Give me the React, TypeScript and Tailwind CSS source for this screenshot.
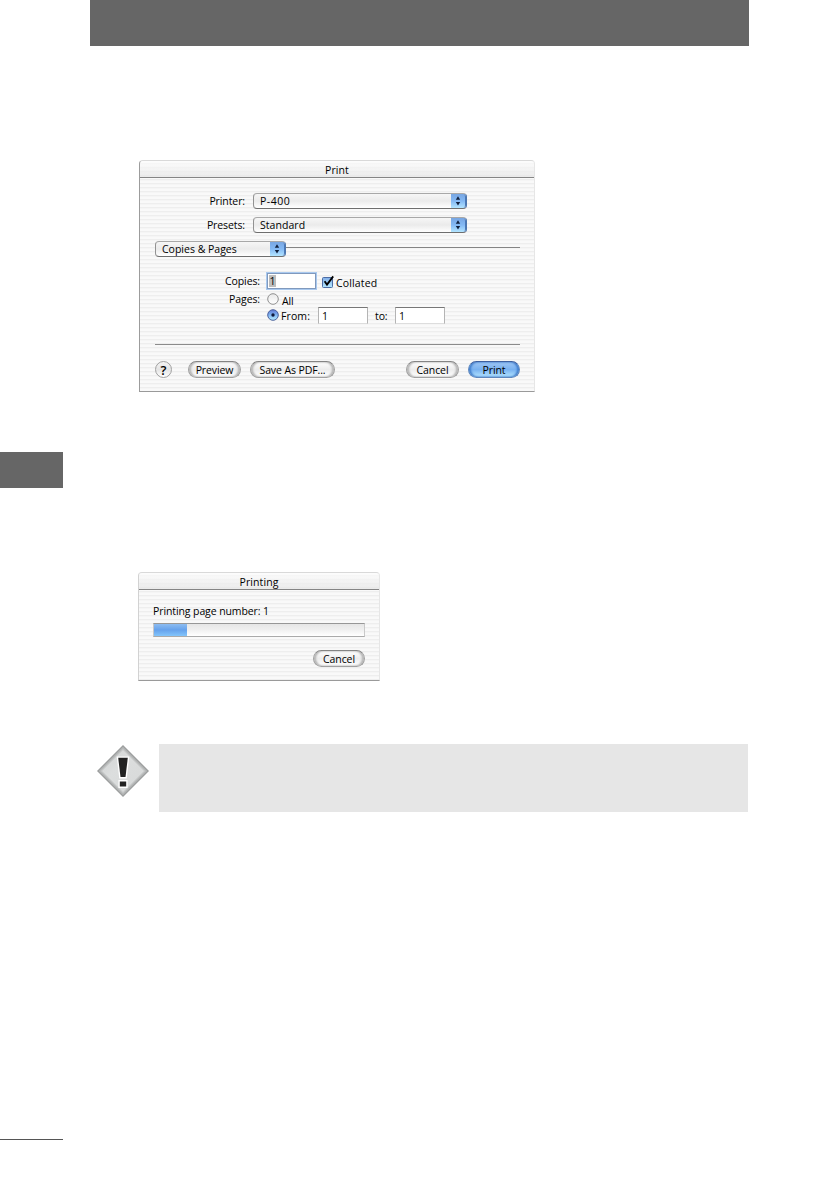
import type { ReactNode } from 'react'
import clsx from 'clsx'

const STRIPES =
  'bg-[repeating-linear-gradient(to_bottom,#f9f9f9_0px,#f9f9f9_2px,#eeeeee_2px,#eeeeee_3px,#f5f5f5_3px,#f5f5f5_4px)]'

interface WindowProps {
  title: string
  className: string
  children: ReactNode
}

function AquaWindow({ title, className, children }: WindowProps) {
  return (
    <section
      className={clsx(
        'flex flex-col rounded-t-[4px] border border-t-[#d9d9d9] border-r-[#e6e6e6] border-b-[#9a9a9a]',
        STRIPES,
        className,
      )}
    >
      <header className="flex h-[17px] shrink-0 items-center justify-center rounded-t-[3px] border-b border-[#858585] bg-linear-to-b from-white/60 to-[#e6e6e6]/70 pt-px">
        <h2 className="tracking-[0.1px]">{title}</h2>
      </header>
      {children}
    </section>
  )
}

function Arrows() {
  return (
    <span className="flex h-full w-[15px] items-center justify-center rounded-r-[3px] border-r border-[#4a78b8] bg-linear-to-b from-[#78a6e2] via-[#84b9f4] to-[#b3e5ff]">
      <svg width="6" height="10" viewBox="0 0 6 10" fill="#10203c">
        <path d="M3 0.2 5.2 3.7H0.8ZM3 9.6 0.8 6.1H5.2Z" />
      </svg>
    </span>
  )
}

function PopUp({ value, className }: { value: string; className: string }) {
  return (
    <button
      className={clsx(
        'flex h-[16px] items-center justify-between rounded-[4px] border border-t-[#a8a8a8] border-r-[#4c76ad] border-b-[#6e6e6e] border-l-[#929292] bg-linear-to-b from-[#f6f6f6] via-[#ebebeb] to-white pl-[6px]',
        className,
      )}
    >
      <span>{value}</span>
      <Arrows />
    </button>
  )
}

function PushButton({ label, className, primary }: { label: string; className: string; primary?: boolean }) {
  return (
    <button
      className={clsx(
        'flex h-[17px] shrink-0 items-center justify-center rounded-full border',
        primary
          ? 'border-[#5f87bd] border-t-[#3d5f9f] bg-linear-to-b from-[#9fc6f3] via-[#78b1f0] to-[#b5e6ff] shadow-[inset_2px_0_2px_#427fce,inset_-2px_0_2px_#427fce]'
          : 'border-[#a0a0a0] border-t-[#848484] bg-linear-to-b from-white via-[#ececec] to-white shadow-[inset_2px_0_2px_#b5b5b5,inset_-2px_0_2px_#b5b5b5]',
        className,
      )}
    >
      {label}
    </button>
  )
}

function PageField({ value }: { value: string }) {
  return (
    <span className="flex h-[17px] w-[50px] items-center border border-[#b4b4b4] border-t-[#777] border-b-[#ddd] bg-white pl-[3px]">
      {value}
    </span>
  )
}

function Radio({ checked }: { checked?: boolean }) {
  return (
    <svg width="12" height="12" viewBox="0 0 12 12">
      <defs>
        <linearGradient id="radio-on" x1="0" y1="0" x2="0" y2="1">
          <stop offset="0" stopColor="#5f78d4" />
          <stop offset="0.5" stopColor="#81b4f1" />
          <stop offset="1" stopColor="#b9efff" />
        </linearGradient>
        <linearGradient id="radio-off" x1="0" y1="0" x2="0" y2="1">
          <stop offset="0" stopColor="#e8e8e8" />
          <stop offset="1" stopColor="#ffffff" />
        </linearGradient>
      </defs>
      <circle
        cx="6"
        cy="6"
        r="5.3"
        fill={checked ? 'url(#radio-on)' : 'url(#radio-off)'}
        stroke={checked ? '#3d5493' : '#858585'}
        strokeWidth="0.9"
      />
      {checked && <circle cx="6" cy="6" r="1.7" fill="#101a3c" />}
    </svg>
  )
}

function Checkbox() {
  return (
    <svg width="13" height="14" viewBox="0 0 13 14">
      <defs>
        <linearGradient id="check-fill" x1="0" y1="0" x2="0" y2="1">
          <stop offset="0" stopColor="#82aee8" />
          <stop offset="1" stopColor="#b4e8ff" />
        </linearGradient>
      </defs>
      <rect x="0.5" y="2.5" width="10" height="10" rx="1" fill="url(#check-fill)" stroke="#4b6ca5" />
      <path d="M2.6 6.2 5 9.6 11.2 1.4" fill="none" stroke="#000" strokeWidth="1.8" />
    </svg>
  )
}

function PrintDialog() {
  return (
    <AquaWindow title="Print" className="ml-[139px] h-[232px] w-[396px] border-l-[#9c9c9c]">
      <div className="flex flex-col pt-[15px] pr-[14px] pl-[15px]">
        <div className="flex items-center">
          <span className="w-[90px] text-right">Printer:</span>
          <PopUp value="P-400" className="ml-[8px] w-[214px] tracking-[0.5px]" />
        </div>
        <div className="mt-2 flex items-center">
          <span className="w-[90px] text-right">Presets:</span>
          <PopUp value="Standard" className="ml-[8px] w-[214px] tracking-[0.05px]" />
        </div>
        <div className="mt-2 flex items-center">
          <PopUp value="Copies & Pages" className="w-[131px] tracking-[0px]" />
          <span className="-mt-[3px] h-px flex-1 bg-[#858585]" />
        </div>

        <div className="mt-[15px] flex h-[18px] items-center">
          <span className="-mt-[1px] w-[105px] text-right">Copies:</span>
          <span className="ml-[7px] flex h-[16px] w-[49px] items-center border border-[#8099bd] bg-white pl-[1px] shadow-[0_0_0_1px_#a9c9ef]">
            <span className="h-[12px] w-[7px] bg-[#bdbdbd] text-center leading-[12px]">1</span>
          </span>
          <span className="mt-[1px] ml-[6px]">
            <Checkbox />
          </span>
          <span className="mt-[3px] ml-[1px] tracking-[0.15px]">Collated</span>
        </div>
        <div className="mt-[3px] flex h-[12px] items-center">
          <span className="-mt-[1px] w-[105px] text-right">Pages:</span>
          <span className="ml-[7px]">
            <Radio />
          </span>
          <span className="mt-[3px] ml-[3px]">All</span>
        </div>
        <div className="mt-[2px] flex h-[17px] items-center">
          <span className="-mt-[1px] ml-[112px]">
            <Radio checked />
          </span>
          <span className="ml-[2px] w-[37px] tracking-[0.1px]">From:</span>
          <PageField value="1" />
          <span className="w-[27px] pl-[7px]">to:</span>
          <PageField value="1" />
        </div>

        <hr className="mt-[20px] border-[#8c8c8c]" />
        <div className="mt-4 flex items-center">
          <button className="flex size-[17px] items-center justify-center rounded-full border border-[#a0a0a0] bg-linear-to-b from-[#f5f5f5] via-[#e4e4e4] to-white text-[13px] font-semibold">
            ?
          </button>
          <PushButton label="Preview" className="ml-[16px] w-[53px]" />
          <PushButton label="Save As PDF..." className="ml-[9px] w-[85px]" />
          <PushButton label="Cancel" className="ml-auto w-[53px]" />
          <PushButton label="Print" className="ml-[9px] w-[52px]" primary />
        </div>
      </div>
    </AquaWindow>
  )
}

function ProgressDialog() {
  return (
    <AquaWindow title="Printing" className="mt-[84px] ml-[138px] h-[109px] w-[242px] border-l-[#d2d2d2]">
      <div className="flex flex-col px-[14px] pt-[13px]">
        <span className="h-[16px] leading-[16px]">Printing page number: 1</span>
        <div className="mt-[4px] h-[14px] w-[212px] border border-[#c9c9c9] border-t-[#979797] border-b-[#aaa] bg-linear-to-b from-[#e6e6e6] via-[#f0f0f0] to-white">
          <div className="h-full w-[33px] bg-linear-to-b from-[#8dbcf1] via-[#66a2ec] to-[#83c5fb]" />
        </div>
        <PushButton label="Cancel" className="mt-[13px] w-[52px] self-end" />
      </div>
    </AquaWindow>
  )
}

function WarningIcon() {
  return (
    <svg className="shrink-0" width="54" height="54" viewBox="0 0 54 54">
      <defs>
        <linearGradient id="sign" x1="0" y1="0" x2="1" y2="1">
          <stop offset="0" stopColor="#cfd1d1" />
          <stop offset="0.4" stopColor="#dcdede" />
          <stop offset="1" stopColor="#d6d8d8" />
        </linearGradient>
      </defs>
      <path d="M27 1 53 27 27 53 1 27Z" fill="#9a9c9c" />
      <path d="M27 2.5 51.5 27 27 51.5 2.5 27Z" fill="#b0b2b2" />
      <path d="M27 4.2 49.8 27 27 49.8 4.2 27Z" fill="#c3c5c5" />
      <path d="M27 6 48 27 27 48 6 27Z" fill="url(#sign)" />
      <g fill="#222" stroke="#fff" strokeWidth="2.8" style={{ paintOrder: 'stroke' }}>
        <path d="M22.2 13.8H31.8L29.5 33H24.5Z" />
        <path d="M23.8 37.5H30.2V42.5H23.8Z" />
      </g>
    </svg>
  )
}

export default function App() {
  return (
    <main className="flex h-[1190px] w-[840px] flex-col overflow-hidden bg-white font-['Open_Sans',sans-serif] text-[10.5px] leading-[14px] tracking-[-0.1px] text-black">
      <div className="ml-[90px] h-[46px] w-[659px] bg-[#666]" />
      <div className="mt-[114px]">
        <PrintDialog />
      </div>

      {/* Chapter tab on the page edge */}
      <div className="mt-[60px] h-[36px] w-[63px] bg-[#666]" />
      <ProgressDialog />

      <div className="mt-[63px] flex items-start pl-[96px]">
        <WarningIcon />
        <div className="ml-[9px] h-[68px] w-[589px] bg-[#e6e6e6]" />
      </div>

      <div className="mt-[327px] h-px w-[63px] bg-[#555]" />
    </main>
  )
}
